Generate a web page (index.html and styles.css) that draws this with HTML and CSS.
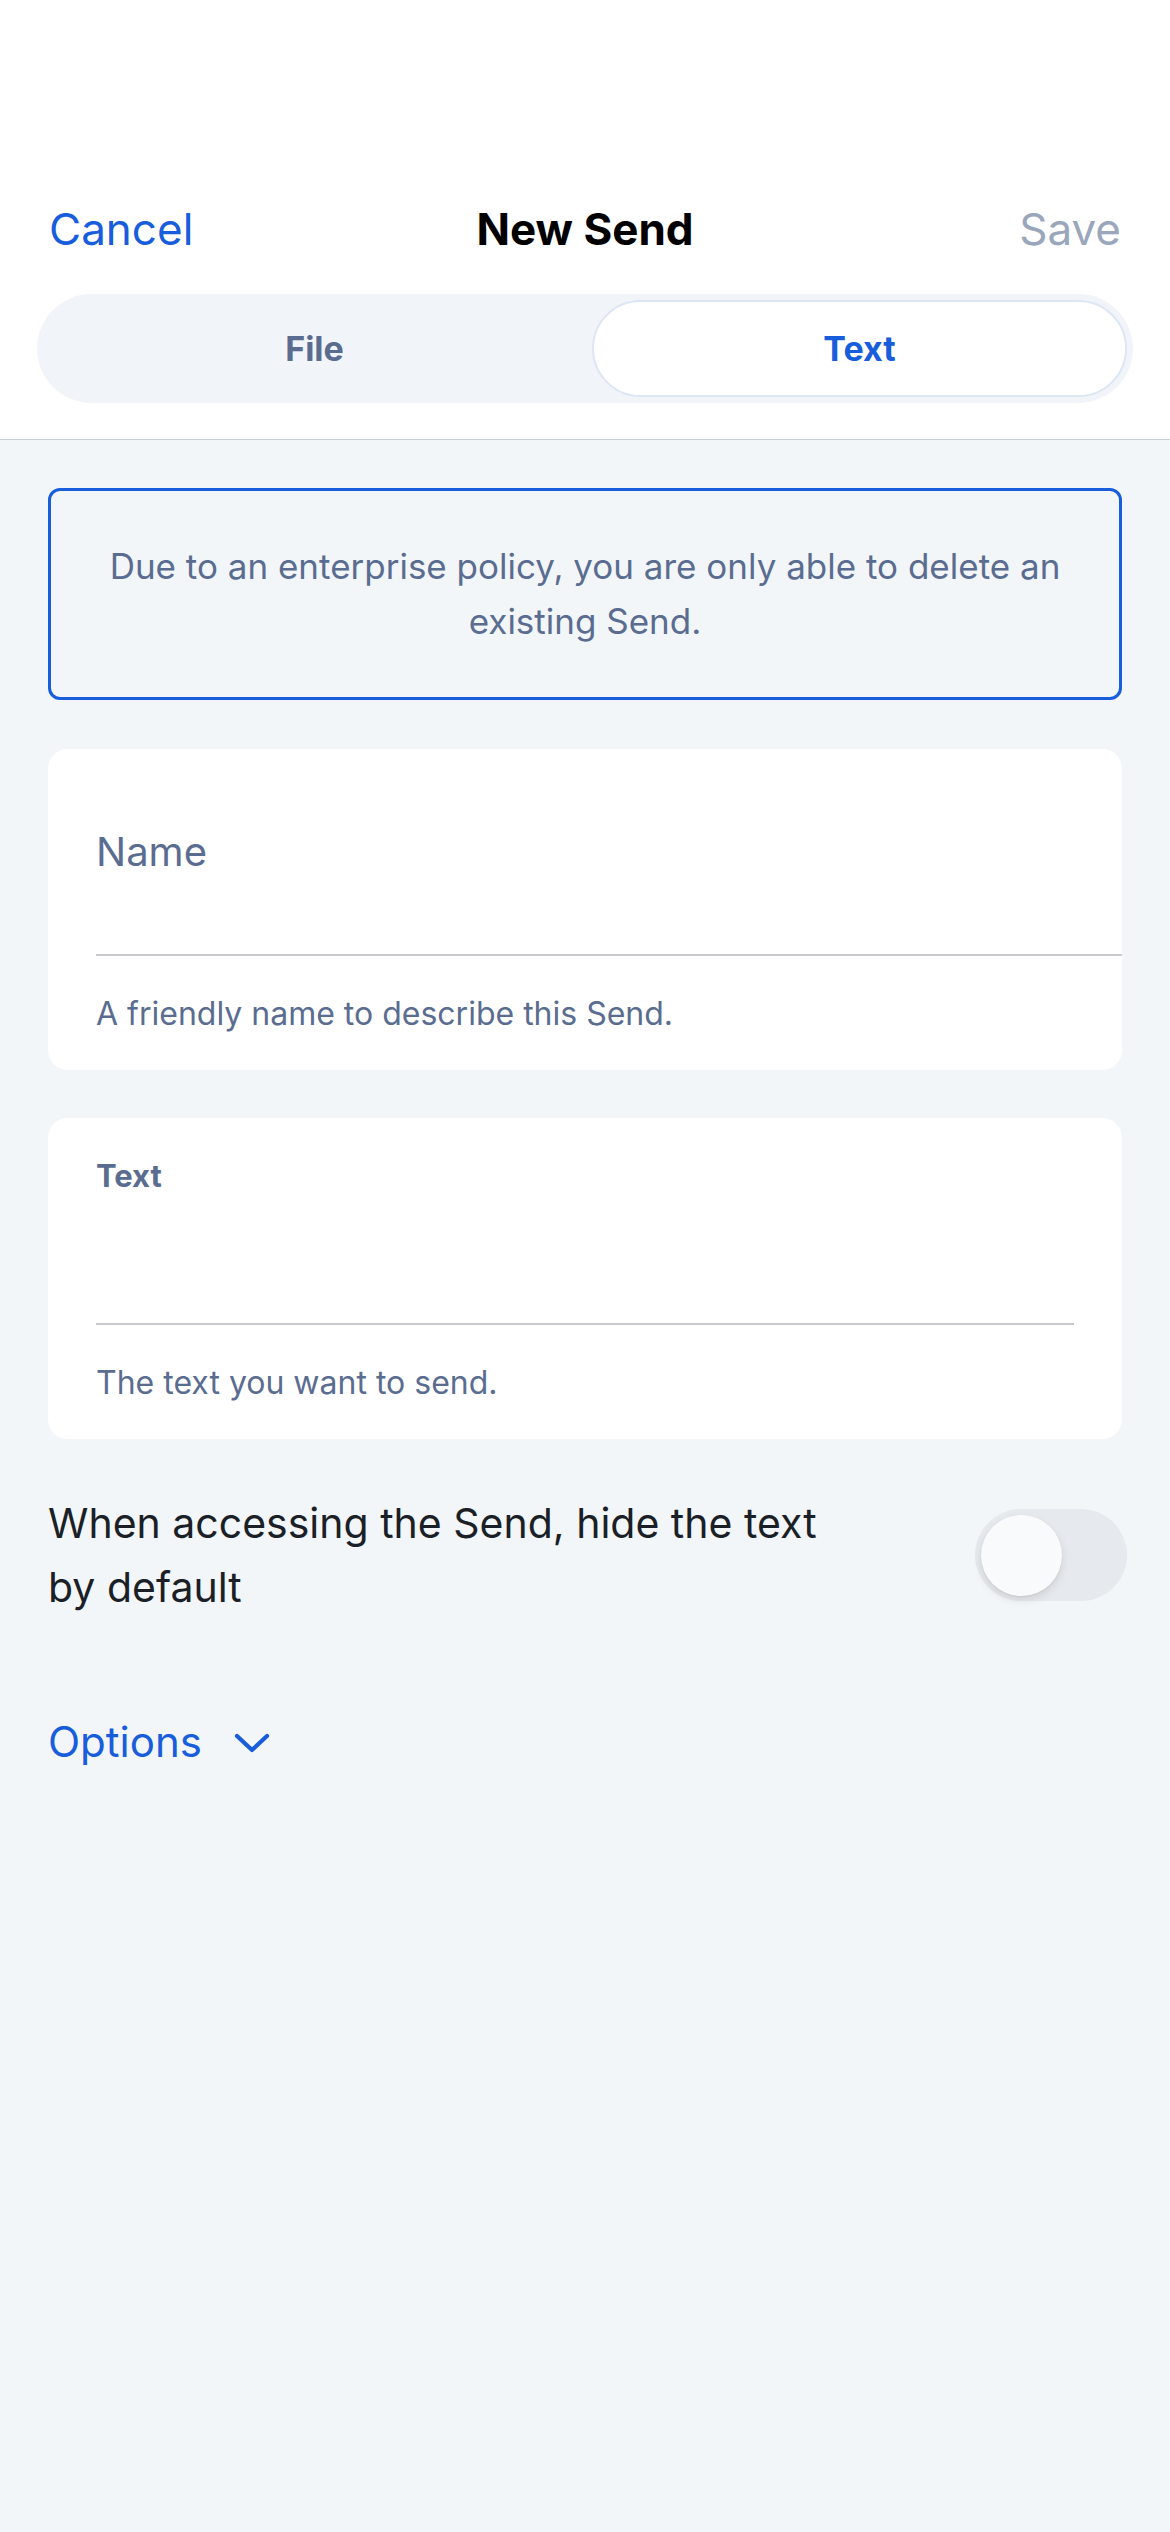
FILE: index.html
```html
<!DOCTYPE html>
<html lang="en">
<head>
<meta charset="utf-8">
<title>New Send</title>
<link rel="stylesheet" href="styles.css">
</head>
<body>
<div class="screen">
  <header class="top">
    <div class="nav">
      <span class="nav-btn cancel">Cancel</span>
      <span class="title">New Send</span>
      <span class="nav-btn save">Save</span>
    </div>
    <div class="segmented">
      <div class="seg">File</div>
      <div class="seg active">Text</div>
    </div>
  </header>
  <main class="content">
    <div class="notice">Due to an enterprise policy, you are only able to delete an existing Send.</div>

    <section class="card">
      <div class="field field-name"><span class="placeholder">Name</span></div>
      <div class="helper">A friendly name to describe this Send.</div>
    </section>

    <section class="card card-text">
      <div class="field-label">Text</div>
      <div class="field field-area"></div>
      <div class="helper">The text you want to send.</div>
    </section>

    <div class="toggle-row">
      <div class="toggle-text">When accessing the Send, hide the text by default</div>
      <div class="switch"><div class="knob"></div></div>
    </div>

    <div class="options">
      <span>Options</span>
      <svg class="chev" width="36" height="20" viewBox="0 0 36 20"><path d="M3 3 L18 17 L33 3" fill="none" stroke="#175ddc" stroke-width="4.2" stroke-linecap="round" stroke-linejoin="round"/></svg>
    </div>
  </main>
</div>
</body>
</html>
```
FILE: styles.css
```css
* { box-sizing: border-box; }
html, body { margin: 0; padding: 0; }
body {
  background: #f3f6f9;
  font-family: Inter, "Noto Sans", "Liberation Sans", sans-serif;
  width: 1170px;
  min-height: 2532px;
}
.screen { min-height: 2532px; background: #f3f6f9; }

.top {
  background: #ffffff;
  padding-top: 180px;
  padding-bottom: 36px;
  border-bottom: 1px solid #c9cfd8;
}
.nav {
  display: grid;
  grid-template-columns: 1fr auto 1fr;
  align-items: center;
  height: 98px;
  padding: 0 49px 0 49px;
}
.nav-btn { font-size: 44px; line-height: 56px; }
.cancel { color: #175ddc; justify-self: start; }
.save { color: #9aa6bc; justify-self: end; }
.title { font-size: 44px; font-weight: 700; color: #000; line-height: 56px; }

.segmented {
  margin: 16px 37px 0;
  height: 109px;
  background: #f1f4f8;
  border-radius: 55px;
  padding: 6px 6px 6px 0;
  display: grid;
  grid-template-columns: 1fr 535px;
}
.seg {
  display: flex;
  align-items: center;
  justify-content: center;
  font-size: 34px;
  font-weight: 700;
  color: #5a6d91;
  border-radius: 49px;
}
.seg.active {
  background: #ffffff;
  color: #175ddc;
  border: 2px solid #dde6f5;
}

.content { padding: 48px 48px 0; }

.notice {
  border: 3px solid #175ddc;
  border-radius: 12px;
  padding: 48px 30px;
  text-align: center;
  color: #5a6d91;
  font-size: 35px;
  line-height: 55px;
}

.card {
  background: #ffffff;
  border-radius: 20px;
  margin-top: 49px;
}
.field-name {
  height: 207px;
  margin-left: 48px;
  border-bottom: 2px solid #c7c9cc;
  display: flex;
  align-items: center;
}
.placeholder { font-size: 40px; color: #5a6d91; line-height: 50px; }
.helper {
  padding: 38px 48px 36px;
  font-size: 32px;
  line-height: 40px;
  color: #5a6d91;
}
.card-text { margin-top: 48px; }
.field-label {
  padding: 38px 48px 0;
  font-size: 31px;
  font-weight: 700;
  line-height: 40px;
  color: #5a6d91;
}
.field-area {
  height: 129px;
  margin: 0 48px;
  border-bottom: 2px solid #c7c9cc;
}

.toggle-row {
  margin-top: 52px;
  display: flex;
  align-items: center;
  justify-content: space-between;
}
.toggle-text {
  max-width: 800px;
  font-size: 41px;
  line-height: 64px;
  color: #1b1f27;
}
.switch {
  width: 152px;
  height: 92px;
  border-radius: 46px;
  background: #e6e9ed;
  margin-right: -5px;
  padding: 6px;
}
.knob {
  width: 81px;
  height: 81px;
  border-radius: 50%;
  background: #f9fafc;
  box-shadow: 0 4px 10px rgba(0,0,0,0.10), 0 1px 2px rgba(0,0,0,0.06);
}

.options {
  margin-top: 91px;
  display: flex;
  align-items: center;
  color: #175ddc;
  font-size: 42px;
  line-height: 64px;
}
.chev { margin-left: 32px; margin-top: 2px; }
```
